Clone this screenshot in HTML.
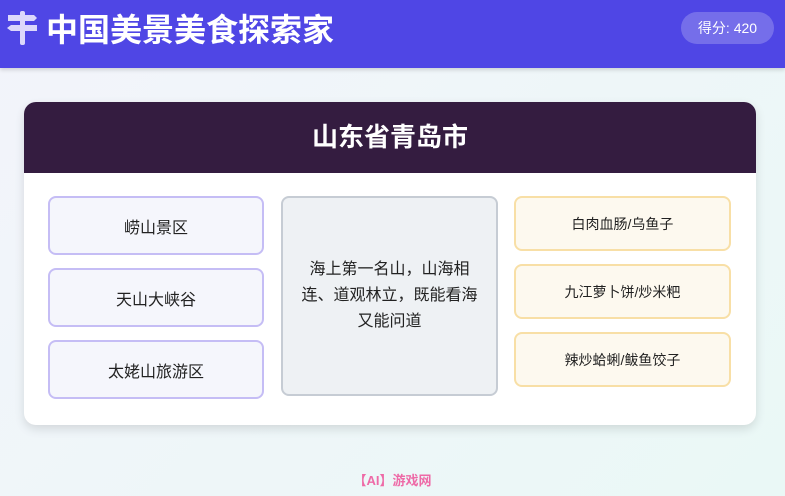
<!DOCTYPE html>
<html><head><meta charset="utf-8"><style>
*{box-sizing:border-box;margin:0;padding:0}
body{width:785px;height:496px;overflow:hidden;font-family:"Liberation Sans","Noto Sans CJK SC",sans-serif;background:linear-gradient(135deg,#f3f4fb,#eaf8f6);position:relative}
.hdr{position:absolute;left:0;top:0;width:785px;height:68px;background:#4f46e5;box-shadow:0 2px 4px rgba(0,0,0,.15)}
.title{position:absolute;left:46px;top:10px;color:#fff;font-size:32px;font-weight:bold;line-height:40px}
.score{position:absolute;left:681px;top:12px;width:93px;height:32px;border-radius:16px;background:rgba(255,255,255,.22);color:#fff;font-size:14px;text-align:center;line-height:32px}
.card{position:absolute;left:24px;top:102px;width:732px;height:323px;background:#fff;border-radius:12px;box-shadow:0 4px 10px rgba(0,0,0,.12);overflow:hidden}
.ch{height:71px;background:#341c40;color:#fff;font-size:26px;font-weight:bold;text-align:center;line-height:71px}
.b{position:absolute;display:flex;align-items:center;justify-content:center;text-align:center;border-radius:8px;font-size:16px;color:#222}
.l{left:24px;width:216px;height:59px;background:#f5f6fc;border:2px solid #c5bdf5}
.r{left:490px;width:217px;height:55px;background:#fdf9ef;border:2px solid #f8dfa6;font-size:14px}
.m{left:257px;top:94px;width:217px;height:200px;background:#eef1f4;border:2px solid #c6ccd4;line-height:26px;padding:0 12px}
.ft{position:absolute;left:0;width:785px;top:470px;text-align:center;color:#ee6aa7;font-size:13px;font-weight:bold}
</style></head><body>
<div class="hdr">
<svg style="position:absolute;left:6px;top:11px" width="32" height="34" viewBox="0 0 32 34"><g fill="#dcd8fb"><rect x="14" y="0" width="5" height="34" rx="2"/><path d="M2 4h26l3 3-3 3H2z"/><path d="M5 14h26v6H5l-4-3z"/></g></svg>
<div class="title">中国美景美食探索家</div>
<div class="score">得分: 420</div>
</div>
<div class="card">
<div class="ch">山东省青岛市</div>
<div class="b l" style="top:94px">崂山景区</div>
<div class="b l" style="top:166px">天山大峡谷</div>
<div class="b l" style="top:238px">太姥山旅游区</div>
<div class="b m">海上第一名山，山海相<br>连、道观林立，既能看海<br>又能问道</div>
<div class="b r" style="top:94px">白肉血肠/乌鱼子</div>
<div class="b r" style="top:162px">九江萝卜饼/炒米粑</div>
<div class="b r" style="top:230px">辣炒蛤蜊/鲅鱼饺子</div>
</div>
<div class="ft">【AI】游戏网</div>
</body></html>
